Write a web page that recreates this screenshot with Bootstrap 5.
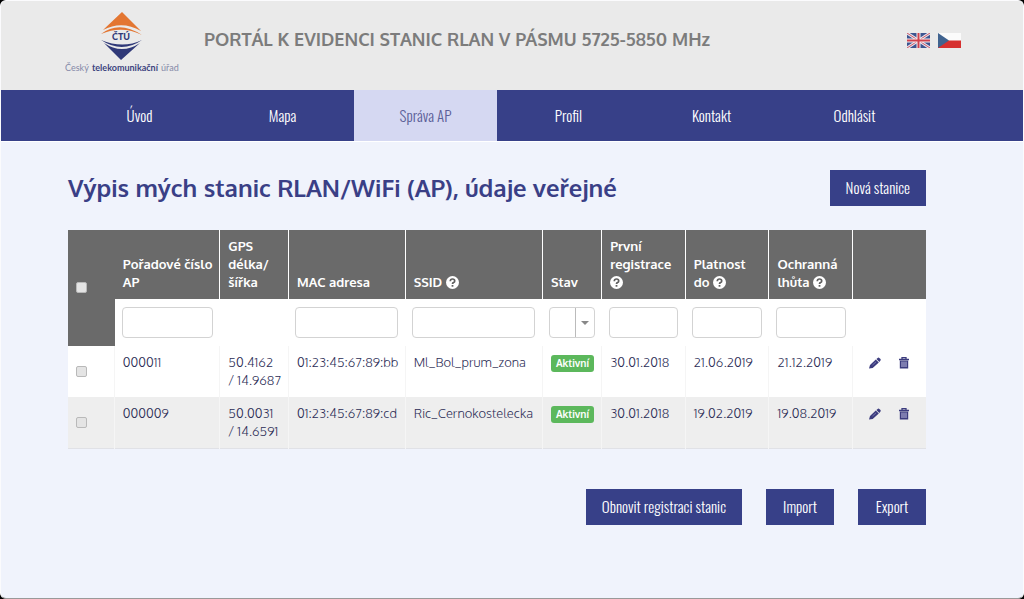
<!DOCTYPE html>
<html lang="cs">
<head>
<meta charset="utf-8">
<meta name="viewport" content="width=device-width, initial-scale=1">
<title>Portál k evidenci stanic RLAN</title>
<link href="https://cdn.jsdelivr.net/npm/bootstrap@5.3.0/dist/css/bootstrap.min.css" rel="stylesheet">
<style>
:root { --navy: #374088; --ink: #2b2c55; --narrow: Oswald, "Liberation Sans Narrow", "Liberation Sans", sans-serif; --wide: Oxygen, "Noto Sans", sans-serif; }
body { background: #000; font-family: var(--wide); font-size: 13px; line-height: 18px; color: var(--ink); }
.portal { background: #f0f3fc; border-radius: 6px; overflow: hidden; border: 1px solid #fbfbfd; border-bottom-color: #999; }
.gutters { padding-left: 67px; padding-right: 97px; }
.top-bar { background: #eaeaea; height: 89px; padding: 10px 62px 0 64px; }
.brand-logo { width: 116px; height: 66px; }
.portal-title { font-size: 18px; line-height: 24px; font-weight: 600; color: #7c7c7c; margin-left: 23px; margin-top: 16px; }
.flags { margin-top: 22px; }
.main-nav { background: var(--navy); border-bottom: 1px solid #fff; font-family: var(--narrow); font-size: 15px; font-weight: 300; }
.main-nav .nav-link { color: #fff; padding: 15px 0; line-height: 21px; }
.main-nav .nav-link.active { background: #d5d8f2; color: #5c6098; }
.page-title { font-size: 24px; line-height: 30px; font-weight: 600; color: #3a3f86; }
.btn-portal { --bs-btn-bg: var(--navy); --bs-btn-color: #fff; --bs-btn-hover-bg: #2b3375; --bs-btn-hover-color: #fff; --bs-btn-active-bg: #2b3375; --bs-btn-active-color: #fff; --bs-btn-border-width: 0; --bs-btn-border-radius: 0; --bs-btn-font-size: 15px; --bs-btn-font-weight: 300; --bs-btn-line-height: 20px; --bs-btn-padding-x: 16px; padding-top: 7px; padding-bottom: 9px; min-width: 68px; font-family: var(--narrow); }
.stations { table-layout: fixed; background: #fff; border-bottom: 1px solid #e0e1e6; color: var(--ink); }
.stations th { padding: 7px 0 8px 8px; }
.stations td { padding: 7px 0 7px 8px; }
.stations thead th { background: #6a6a6a; color: #fff; font-size: 13px; border-right: 1px solid #fff; vertical-align: bottom; }
.stations thead th:last-child { border-right: 0; }
.stations thead th.pick-all { vertical-align: middle; border-right-color: #6a6a6a; }
.stations .filters td { padding: 8px 7px; height: 47px; }
.stations tbody td { border-right: 1px solid #f5f5f5; vertical-align: top; height: 51px; white-space: nowrap; }
.stations tbody td:last-child { border-right: 0; }
.stations tbody tr:nth-child(even) { background: #eee; }
.stations tbody td.pick { vertical-align: middle; }
.tick { appearance: none; display: block; width: 11px; height: 11px; background: #e4e4e4; border: 1px solid #b9b9b9; border-radius: 2px; margin: 0; }
.tick:checked { background: var(--navy); }
.filter-box { display: block; width: 100%; height: 31px; border: 1px solid #d3d3d3; border-radius: 4px; background: #fff; padding: 0 6px; }
select.filter-box { appearance: none; background: #fff url("data:image/svg+xml,%3Csvg xmlns='http://www.w3.org/2000/svg' width='19' height='29'%3E%3Cpath d='M.5 0v29' stroke='%23bbb'/%3E%3Cpath d='M6 13h8l-4 4z' fill='%23888'/%3E%3C/svg%3E") right center no-repeat; }
.state-badge { --bs-badge-font-size: 10px; --bs-badge-padding-x: 5px; --bs-badge-padding-y: 4px; --bs-badge-border-radius: 3px; background: #5cb85c; line-height: 9px; }
.data-font { font-weight: 300; }
.row-tools { gap: 17px; padding-left: 8px; }
.row-tools a, .row-tools svg { display: block; }
.help { width: 13px; height: 13px; vertical-align: -2px; }
.w-pick { width: 5.4%; } .w-num { width: 12.3%; } .w-gps { width: 8%; } .w-mac { width: 13.6%; } .w-ssid { width: 16%; }
.w-state { width: 6.9%; } .w-date { width: 9.75%; }
</style>
</head>
<body>
<svg class="d-none" aria-hidden="true">
  <symbol id="q" viewBox="0 0 13 13"><circle cx="6.500" cy="6.500" r="6.500" fill="#fff"/><path d="M4.300 5.200Q4.300 3 6.500 3T8.700 4.900Q8.700 6 7.500 6.600Q6.500 7 6.500 8" fill="none" stroke="#5f5f5f" stroke-width="1.700"/><path d="M5.600 9h1.800v1.700H5.600z" fill="#5f5f5f"/></symbol>
  <symbol id="pen" viewBox="0 0 12 12"><path d="M0 11.500 1 8 6.800 2.600 9.800 5.500 3.700 11z M7.400 2.100 9 .8Q9.700.3 10.300.9L11.500 2Q12 2.700 11.500 3.400L10.300 5z" fill="#3c3c7e"/><path d="M3.500 8 7 4.900" stroke="#8c8cc0" stroke-width=".7"/></symbol>
  <symbol id="bin" viewBox="0 0 12 12"><path d="M1 2.500h10M4 2V.7h4V2" fill="none" stroke="#3c3c7e" stroke-width="1.300"/><path d="M1.800 3.500h8.400V11.500H1.800z" fill="#3c3c7e"/><path d="M4 4.500v5.500M6 4.500v5.500M8 4.500v5.500" stroke="#b4b3d8" stroke-width="1.100"/></symbol>
</svg>
<div class="portal min-vh-100 d-flex flex-column">
  <header class="top-bar d-flex align-items-start">
    <a href="#" class="d-block" aria-label="Český telekomunikační úřad">
      <svg class="brand-logo d-block" viewBox="0 0 116 66">
        <path d="M57 1 76 20Q57 9 38 19z" fill="#e37632"/>
        <path d="M36 23Q54 9 77 24Q57 14 36 23z" fill="#e37632"/>
        <path d="M36 29Q58 38 77 29Q57 43 36 29z" fill="#303978"/>
        <path d="M39 32Q57 44 75 32L56 49z" fill="#303978"/>
        <text x="56" y="29" text-anchor="middle" font-family="Lato, sans-serif" font-weight="900" font-size="9" fill="#303978">ČTÚ</text>
        <text x="0" y="60" font-family="Lato, sans-serif" font-size="9" fill="#8589a8">Český</text>
        <text x="27" y="60" font-family="Lato, sans-serif" font-weight="700" font-size="9" fill="#3d447f">telekomunikační</text>
        <text x="96" y="60" font-family="Lato, sans-serif" font-size="9" fill="#8589a8">úřad</text>
      </svg>
    </a>
    <div class="portal-title">PORTÁL K EVIDENCI STANIC RLAN V PÁSMU 5725-5850 MHz</div>
    <div class="flags d-flex gap-2 ms-auto">
      <a href="#" aria-label="English"><svg class="d-block" width="23" height="15" viewBox="0 0 23 15"><path d="M0 0h23v15H0z" fill="#3d5590"/><path d="m0 0 23 15M23 0 0 15" stroke="#e6e2ec" stroke-width="3"/><path d="m0 0 23 15M23 0 0 15" stroke="#cf5a66" stroke-width="1"/><path d="M11.500 0v15M0 7.500h23" stroke="#f6f0f2" stroke-width="4"/><path d="M11.500 0v15M0 7.500h23" stroke="#cf414d" stroke-width="2"/></svg></a>
      <a href="#" aria-label="Čeština"><svg class="d-block" width="23" height="15" viewBox="0 0 23 15"><path d="M0 0h23v8H0z" fill="#fbfbfb"/><path d="M0 7.500h23V15H0z" fill="#d6302f"/><path d="M0 0 11 7.500 0 15z" fill="#40638f"/></svg></a>
    </div>
  </header>
  <nav class="main-nav gutters">
    <ul class="nav nav-justified">
      <li class="nav-item"><a class="nav-link" href="#">Úvod</a></li>
      <li class="nav-item"><a class="nav-link" href="#">Mapa</a></li>
      <li class="nav-item"><a class="nav-link active" aria-current="page" href="#">Správa AP</a></li>
      <li class="nav-item"><a class="nav-link" href="#">Profil</a></li>
      <li class="nav-item"><a class="nav-link" href="#">Kontakt</a></li>
      <li class="nav-item"><a class="nav-link" href="#">Odhlásit</a></li>
    </ul>
  </nav>
  <main class="gutters flex-grow-1">
    <div class="d-flex justify-content-between align-items-center mt-4 pt-1 mb-4">
      <h1 class="page-title mb-0">Výpis mých stanic RLAN/WiFi (AP), údaje veřejné</h1>
      <button type="button" class="btn btn-portal">Nová stanice</button>
    </div>
    <table class="stations w-100">
      <colgroup><col class="w-pick"><col class="w-num"><col class="w-gps"><col class="w-mac"><col class="w-ssid"><col class="w-state"><col class="w-date"><col class="w-date"><col class="w-date"><col></colgroup>
      <thead>
        <tr>
          <th rowspan="2" class="pick-all"><input type="checkbox" class="tick" aria-label="Vybrat vše"></th>
          <th>Pořadové číslo AP</th>
          <th>GPS<br>délka/<br>šířka</th>
          <th>MAC adresa</th>
          <th>SSID <svg class="help"><use href="#q"/></svg></th>
          <th>Stav</th>
          <th>První<br>registrace<br><svg class="help"><use href="#q"/></svg></th>
          <th>Platnost<br>do <svg class="help"><use href="#q"/></svg></th>
          <th>Ochranná<br>lhůta <svg class="help"><use href="#q"/></svg></th>
          <th></th>
        </tr>
        <tr class="filters">
          <td><input type="text" class="filter-box" aria-label="Pořadové číslo AP"></td>
          <td></td>
          <td><input type="text" class="filter-box" aria-label="MAC adresa"></td>
          <td><input type="text" class="filter-box" aria-label="SSID"></td>
          <td><select class="filter-box" aria-label="Stav"><option></option></select></td>
          <td><input type="text" class="filter-box" aria-label="První registrace"></td>
          <td><input type="text" class="filter-box" aria-label="Platnost do"></td>
          <td><input type="text" class="filter-box" aria-label="Ochranná lhůta"></td>
          <td></td>
        </tr>
      </thead>
      <tbody class="data-font">
        <tr>
          <td class="pick"><input type="checkbox" class="tick" aria-label="Vybrat 000011"></td>
          <td>000011</td>
          <td>50.4162<br>/ 14.9687</td>
          <td>01:23:45:67:89:bb</td>
          <td>Ml_Bol_prum_zona</td>
          <td><span class="badge state-badge">Aktivní</span></td>
          <td>30.01.2018</td><td>21.06.2019</td><td>21.12.2019</td>
          <td><div class="d-flex row-tools pt-1"><a href="#" aria-label="Upravit"><svg width="12" height="12"><use href="#pen"/></svg></a><a href="#" aria-label="Smazat"><svg width="12" height="12"><use href="#bin"/></svg></a></div></td>
        </tr>
        <tr>
          <td class="pick"><input type="checkbox" class="tick" aria-label="Vybrat 000009"></td>
          <td>000009</td>
          <td>50.0031<br>/ 14.6591</td>
          <td>01:23:45:67:89:cd</td>
          <td>Ric_Cernokostelecka</td>
          <td><span class="badge state-badge">Aktivní</span></td>
          <td>30.01.2018</td><td>19.02.2019</td><td>19.08.2019</td>
          <td><div class="d-flex row-tools pt-1"><a href="#" aria-label="Upravit"><svg width="12" height="12"><use href="#pen"/></svg></a><a href="#" aria-label="Smazat"><svg width="12" height="12"><use href="#bin"/></svg></a></div></td>
        </tr>
      </tbody>
    </table>
    <div class="d-flex justify-content-end gap-4 mt-4 pt-3 pb-4">
      <button type="button" class="btn btn-portal">Obnovit registraci stanic</button>
      <button type="button" class="btn btn-portal">Import</button>
      <button type="button" class="btn btn-portal">Export</button>
    </div>
  </main>
</div>
<script src="https://cdn.jsdelivr.net/npm/bootstrap@5.3.0/dist/js/bootstrap.bundle.min.js"></script>
</body>
</html>
